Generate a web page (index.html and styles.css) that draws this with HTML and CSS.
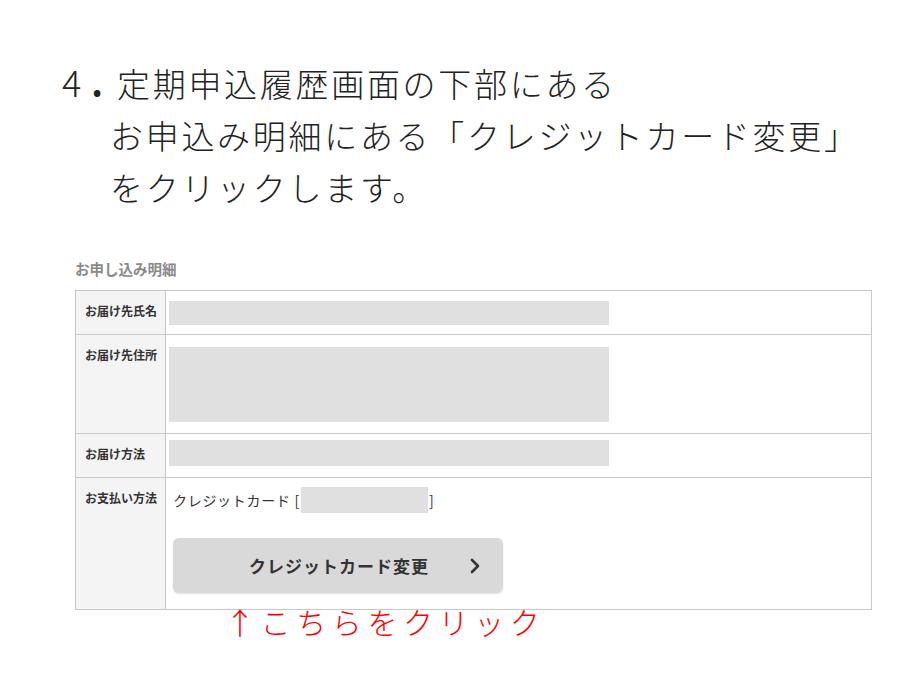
FILE: index.html
```html
<!DOCTYPE HTML>
<html>
<head>
    <meta charset="utf-8"/>
    <title>クレジットカード変更の手順</title>
    <link rel="stylesheet" href="styles.css">
</head>
<body>
<div id="container">

    <div class="step">
        <div class="step-line"><span class="step-num">4<span class="step-dot">.</span></span>定期申込履歴画面の下部にある</div>
        <div class="step-line step-indent">お申込み明細にある「クレジットカード変更」</div>
        <div class="step-line step-indent">をクリックします。</div>
    </div>

    <div id="detail">
        <div class="detail-title">お申し込み明細</div>
        <table class="detail-table">
            <tr>
                <th>お届け先氏名</th>
                <td class="cell-name"><div class="mask mask-name"></div></td>
            </tr>
            <tr>
                <th>お届け先住所</th>
                <td class="cell-addr"><div class="mask mask-addr"></div></td>
            </tr>
            <tr>
                <th>お届け方法</th>
                <td class="cell-ship"><div class="mask mask-ship"></div></td>
            </tr>
            <tr>
                <th>お支払い方法</th>
                <td class="cell-pay">
                    <div class="pay-text">クレジットカード [<span class="mask mask-card"></span>]</div>
                    <button type="button" class="card-btn">
                        <span class="card-btn-label">クレジットカード変更</span>
                        <svg class="card-btn-arrow" width="10" height="16" viewBox="0 0 10 16">
                            <path d="M2 2 L8 8 L2 14" fill="none" stroke="#333" stroke-width="2.6" stroke-linecap="round" stroke-linejoin="round"/>
                        </svg>
                    </button>
                </td>
            </tr>
        </table>
        <div class="click-note">↑こちらをクリック</div>
    </div>

</div>
</body>
</html>
```

FILE: styles.css
```css
body, html{
    margin:0px; padding:0px;
    background:#fff;
}
#container{
    position: relative;
    width:900px;
    height:687px;
    overflow:hidden;
}
/* 手順の見出し */
.step{
    padding:58px 0 0 62px;
    font-family:"Noto Sans CJK JP", sans-serif;
    font-weight:300;
    font-size:33px;
    line-height:51px;
    letter-spacing:2.7px;
    color:#222;
}
.step-line{
    white-space:nowrap;
    height:51px;
}
.step-line + .step-line{
    margin-top:1px;
}
.step-num{
    display:inline-block;
    width:55px;
    letter-spacing:0;
    font-size:36px;
    line-height:1;
}
.step-dot{
    font-weight:700;
    margin-left:10px;
}
.step-indent{
    padding-left:48px;
}

/* 明細テーブル */
#detail{
    margin:46px 0 0 75px;
    width:797px;
    font-family:"Noto Sans CJK JP", sans-serif;
}
.detail-title{
    font-size:14.5px;
    font-weight:bold;
    color:#8a8a8a;
    line-height:20px;
    margin:0 0 11px 0;
}
.detail-table{
    width:100%;
    border-collapse:collapse;
    border:1px solid #c8c8c8;
}
.detail-table th{
    width:80px;
    background:#f4f4f4;
    border:1px solid #c8c8c8;
    text-align:left;
    vertical-align:top;
    font-size:12px;
    font-weight:bold;
    color:#333;
    line-height:14px;
    padding:13px 0 0 9px;
    white-space:nowrap;
}
.detail-table td{
    border:1px solid #c8c8c8;
    vertical-align:top;
    padding:0 3px;
}
.mask{
    background:#e0e0e0;
    width:440px;
}
.cell-name{ padding-top:10px !important; padding-bottom:9px !important; }
.mask-name{ height:24px; }
.cell-addr{ padding-top:12px !important; padding-bottom:11px !important; }
.mask-addr{ height:75px; }
.cell-ship{ padding-top:6px !important; padding-bottom:11px !important; }
.mask-ship{ height:26px; }

.cell-pay{
    padding:9px 0 16px 7px !important;
}
.pay-text{
    font-size:14px;
    color:#333;
    line-height:26px;
    letter-spacing:0.7px;
}
.mask-card{
    display:inline-block;
    vertical-align:top;
    width:127px;
    height:26px;
    margin:0 1px;
}
.card-btn{
    display:flex;
    align-items:center;
    position:relative;
    margin:25px 0 0 0;
    width:330px;
    height:55px;
    border:none;
    border-radius:6px;
    background:#d9d9d9;
    box-shadow:0 1px 2px rgba(0,0,0,0.12);
    padding:0;
    font-family:"Noto Sans CJK JP", sans-serif;
    cursor:pointer;
}
.card-btn-label{
    flex:1;
    text-align:center;
    font-size:17px;
    font-weight:bold;
    letter-spacing:1px;
    color:#333;
    padding-left:2px;
}
.card-btn-arrow{
    position:absolute;
    right:23px;
    top:20px;
}
.click-note{
    margin:-6px 0 0 150px;
    font-family:"Noto Sans CJK JP", sans-serif;
    font-weight:300;
    font-size:30px;
    line-height:34px;
    letter-spacing:5.6px;
    color:#f00;
}
```
